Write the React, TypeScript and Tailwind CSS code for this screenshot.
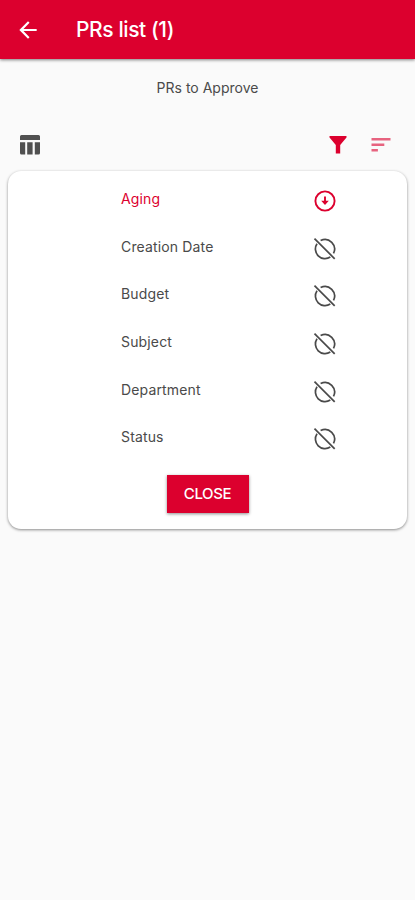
import clsx from 'clsx'

type SortOption = {
  label: string
  active?: boolean
}

const sortOptions: SortOption[] = [
  { label: 'Aging', active: true },
  { label: 'Creation Date' },
  { label: 'Budget' },
  { label: 'Subject' },
  { label: 'Department' },
  { label: 'Status' },
]

function BackIcon() {
  return (
    <svg viewBox="0 0 24 24" className="h-[26px] w-[26px]" fill="currentColor" aria-hidden="true">
      <path d="M20 11H7.83l5.59-5.59L12 4l-8 8 8 8 1.41-1.41L7.83 13H20v-2z" />
    </svg>
  )
}

function ColumnsIcon() {
  return (
    <svg viewBox="0 0 20 20" className="h-5 w-5" fill="currentColor" aria-hidden="true">
      <path d="M1.5 0h17A1.5 1.5 0 0 1 20 1.5V5H0V1.5A1.5 1.5 0 0 1 1.5 0z" />
      <path d="M0 7.3h5.2v12.2H1.5A1.5 1.5 0 0 1 0 18zM7.2 7.3h5.4v12.2H7.2zM14.8 7.3H20V18a1.5 1.5 0 0 1-1.5 1.5h-3.7z" />
    </svg>
  )
}

function FunnelIcon() {
  return (
    <svg viewBox="0 0 18 18" className="h-[18px] w-[18px]" fill="currentColor" aria-hidden="true">
      <path d="M.5 0h17v1.5L11.2 9v8.5H6.8V9L.5 1.5z" />
    </svg>
  )
}

function SortIcon() {
  return (
    <svg viewBox="0 0 20 14" className="h-[14px] w-5" fill="currentColor" aria-hidden="true">
      <path d="M.5 0h19v2.6H.5zM.5 5.5h12.8v2.6H.5zM.5 11h6.4v2.6H.5z" />
    </svg>
  )
}

function SortDownIcon() {
  return (
    <svg viewBox="0 0 24 24" className="h-6 w-6" fill="none" stroke="currentColor" aria-hidden="true">
      <circle cx="12" cy="12" r="9.6" strokeWidth="1.9" />
      <path d="M12 7.5v5" strokeWidth="1.9" />
      <path d="M8.2 11.8h7.6L12 16z" fill="currentColor" stroke="none" />
    </svg>
  )
}

function SortOffIcon() {
  return (
    <svg viewBox="0 0 24 24" className="h-6 w-6" fill="none" stroke="currentColor" strokeWidth="1.7" aria-hidden="true">
      <path d="M7.6 3.5A9.6 9.6 0 0 1 20.5 16.4" />
      <path d="M4 6.7A9.6 9.6 0 0 0 17.3 20" />
      <path d="M1.5 1.6 21.7 21.8" />
    </svg>
  )
}

export default function App() {
  return (
    <div className="flex h-[900px] w-full flex-col bg-[#fafafa] font-['Inter',sans-serif] text-[#4a4a4a]">
      <header className="flex h-[59px] shrink-0 items-center bg-[#dc002e] pl-[15px] text-white shadow-[0_1px_3px_rgba(0,0,0,0.5)]">
        <button type="button" aria-label="Back">
          <BackIcon />
        </button>
        <h1 className="ml-[35px] text-[21px] leading-7 font-medium tracking-[-0.4px]">PRs list (1)</h1>
      </header>

      <p className="mt-[19px] text-center text-sm leading-5">PRs to Approve</p>

      <div className="mt-[37px] flex h-5 items-center pr-6 pl-5 text-[#505050]">
        <ColumnsIcon />
        <div className="ml-auto flex items-center gap-6 text-[#dc002e]">
          <FunnelIcon />
          <span className="opacity-60">
            <SortIcon />
          </span>
        </div>
      </div>

      <section className="mx-2 mt-4 flex h-[358px] shrink-0 flex-col items-center rounded-[13px] bg-white pt-[6px] shadow-[0_1px_3px_rgba(0,0,0,0.45)]">
        <ul className="w-full">
          {sortOptions.map(({ label, active }) => (
            <li
              key={label}
              className={clsx('flex h-[47.7px] items-center justify-between pr-[70px] pl-[113px]', active && 'text-[#dc002e]')}
            >
              <span className="-mt-1 text-sm leading-5 tracking-[0.15px]">{label}</span>
              {active ? <SortDownIcon /> : <SortOffIcon />}
            </li>
          ))}
        </ul>
        <button
          type="button"
          className="mt-[11.5px] h-[38px] w-[82px] bg-[#dc002e] pt-0.5 text-[15px] font-medium tracking-[-0.4px] text-white shadow-[0_1px_3px_rgba(0,0,0,0.45)]"
        >
          CLOSE
        </button>
      </section>
    </div>
  )
}
